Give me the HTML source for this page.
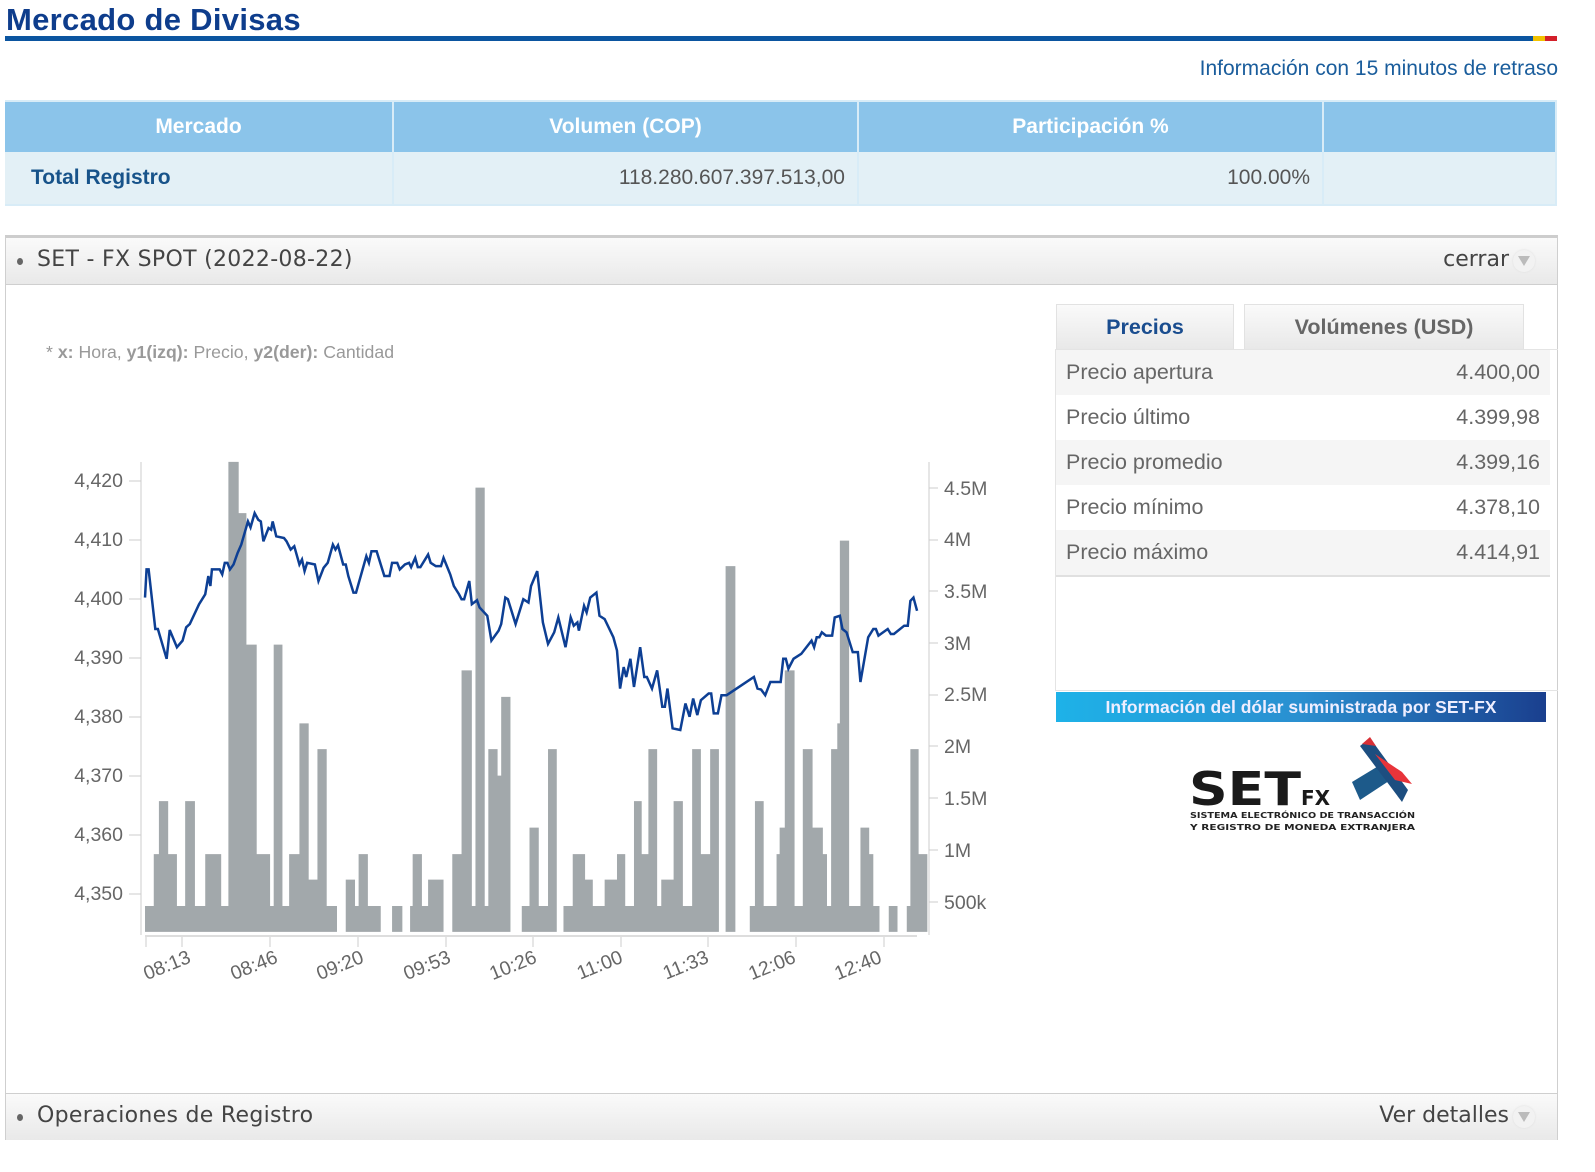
<!DOCTYPE html>
<html><head><meta charset="utf-8"><style>
*{margin:0;padding:0;box-sizing:border-box}
body{width:1595px;height:1172px;background:#fff;font-family:"Liberation Sans",Arial,sans-serif;position:relative;overflow:hidden}
.abs{position:absolute}
.title{left:6px;top:2px;font-size:31px;font-weight:bold;color:#0e3d8c;letter-spacing:0.3px}
.bar{left:5px;top:36px;width:1528px;height:5px;background:#0b55a0}
.info{right:37px;top:57px;font-size:21px;color:#1a5d9c}
table.t{position:absolute;left:5px;top:100px;width:1552px;border-collapse:collapse}
table.t th{background:#8bc4ea;color:#fff;font-size:21px;height:51px;border-right:2px solid #d8ecf7;border-top:2px solid #d8ecf7}
table.t td{background:#e3f0f6;height:53px;font-size:21px;color:#555;border-right:2px solid #d8ecf7;border-bottom:2px solid #d8ecf7;padding:0 12px}
.panel{left:5px;top:235px;width:1553px;height:905px;border:1px solid #cfcfcf;border-top:3px solid #cdcdcd}
.hdr{position:absolute;left:0;width:100%;height:47px;background:linear-gradient(#fafafa,#e9e9e9);border-bottom:1px solid #cfcfcf;font-family:"DejaVu Sans",Verdana,sans-serif;font-size:22px;color:#444}
.hdr .dot{position:absolute;left:11px;top:20px;width:6px;height:7px;border-radius:50%;background:#666}
.hdr .l{position:absolute;left:31px;top:9px;letter-spacing:0.3px}
.hdr .r{position:absolute;right:48px;top:9px}
.hdr .ic{position:absolute;right:22px;top:12px;width:22px;height:22px;border-radius:50%;background:#f2f2f2;box-shadow:0 0 2px #ddd}
.hdr .ic:after{content:"";position:absolute;left:5px;top:6px;border-left:6px solid transparent;border-right:6px solid transparent;border-top:10px solid #bbb}
.tab{position:absolute;top:304px;height:46px;font-size:21.5px;font-weight:bold;text-align:center;line-height:44px;background:linear-gradient(#fafafa,#e8e8e8);border:1px solid #e2e2e2;border-bottom:none}
.row{position:absolute;left:1056px;width:494px;height:45px;font-size:21.5px;color:#666;line-height:45px;padding:0 10px}
.row span{float:right}
</style></head><body>
<div class="abs title">Mercado de Divisas</div>
<div class="abs bar"></div>
<div class="abs" style="left:1533px;top:36px;width:12px;height:5px;background:#f2c200"></div>
<div class="abs" style="left:1545px;top:36px;width:12px;height:5px;background:#d3202a"></div>
<div class="abs info">Información con 15 minutos de retraso</div>
<table class="t">
<tr><th style="width:388px">Mercado</th><th style="width:465px">Volumen (COP)</th><th style="width:465px">Participación %</th><th></th></tr>
<tr><td style="color:#17538a;font-weight:bold;padding-left:26px">Total Registro</td><td style="text-align:right">118.280.607.397.513,00</td><td style="text-align:right">100.00%</td><td></td></tr>
</table>

<div class="abs panel">
 <div class="hdr" style="top:0"><div class="dot"></div><div class="l">SET - FX SPOT (2022-08-22)</div><div class="r">cerrar</div><div class="ic"></div></div>
 <div class="hdr" style="top:855px;border-top:1px solid #cfcfcf;border-bottom:none"><div class="dot"></div><div class="l">Operaciones de Registro</div><div class="r">Ver detalles</div><div class="ic"></div></div>
</div>

<div class="abs" style="left:46px;top:342px;font-size:17.7px;color:#999">* <b>x:</b> Hora, <b>y1(izq):</b> Precio, <b>y2(der):</b> Cantidad</div>

<svg class="abs" style="left:0;top:0" width="1595" height="1172">
<g font-family="Liberation Sans, Arial, sans-serif" font-size="19.5" fill="#666">
<g text-anchor="end">
<text x="123" y="487">4,420</text><text x="123" y="546">4,410</text><text x="123" y="605">4,400</text><text x="123" y="664">4,390</text><text x="123" y="723">4,380</text><text x="123" y="782">4,370</text><text x="123" y="841">4,360</text><text x="123" y="900">4,350</text>
</g>
<text x="944" y="495">4.5M</text><text x="944" y="546">4M</text><text x="944" y="598">3.5M</text><text x="944" y="650">3M</text><text x="944" y="701">2.5M</text><text x="944" y="753">2M</text><text x="944" y="805">1.5M</text><text x="944" y="857">1M</text><text x="944" y="909">500k</text>
</g>
<g stroke="#ccc" stroke-width="1">
<line x1="141" y1="462" x2="141" y2="935"/>
<line x1="129" y1="481" x2="141" y2="481"/><line x1="129" y1="540" x2="141" y2="540"/><line x1="129" y1="599" x2="141" y2="599"/><line x1="129" y1="658" x2="141" y2="658"/><line x1="129" y1="717" x2="141" y2="717"/><line x1="129" y1="776" x2="141" y2="776"/><line x1="129" y1="835" x2="141" y2="835"/><line x1="129" y1="894" x2="141" y2="894"/>
<line x1="929" y1="462" x2="929" y2="935"/>
<line x1="929" y1="488" x2="938" y2="488"/><line x1="929" y1="540" x2="938" y2="540"/><line x1="929" y1="591" x2="938" y2="591"/><line x1="929" y1="643" x2="938" y2="643"/><line x1="929" y1="695" x2="938" y2="695"/><line x1="929" y1="746" x2="938" y2="746"/><line x1="929" y1="798" x2="938" y2="798"/><line x1="929" y1="850" x2="938" y2="850"/><line x1="929" y1="902" x2="938" y2="902"/>
<line x1="145" y1="936" x2="917" y2="936" stroke="#ddd" stroke-width="2"/>
<line x1="146" y1="937" x2="146" y2="947"/><line x1="182" y1="937" x2="182" y2="947"/><line x1="270" y1="937" x2="270" y2="947"/><line x1="358" y1="937" x2="358" y2="947"/><line x1="446" y1="937" x2="446" y2="947"/><line x1="533" y1="937" x2="533" y2="947"/><line x1="621" y1="937" x2="621" y2="947"/><line x1="708" y1="937" x2="708" y2="947"/><line x1="796" y1="937" x2="796" y2="947"/><line x1="884" y1="937" x2="884" y2="947"/>
</g>
<g font-family="Liberation Sans, Arial, sans-serif" font-size="19.5" fill="#666" text-anchor="end">
<text transform="translate(192,962) rotate(-22)">08:13</text>
<text transform="translate(279,962) rotate(-22)">08:46</text>
<text transform="translate(365,962) rotate(-22)">09:20</text>
<text transform="translate(452,962) rotate(-22)">09:53</text>
<text transform="translate(538,962) rotate(-22)">10:26</text>
<text transform="translate(624,962) rotate(-22)">11:00</text>
<text transform="translate(710,962) rotate(-22)">11:33</text>
<text transform="translate(797,962) rotate(-22)">12:06</text>
<text transform="translate(883,962) rotate(-22)">12:40</text>
</g>
<g transform="translate(127,442) scale(0.5147,0.331)" fill="#a2a8ab">
<path d="M35 1480V1402H52V1245H62V1085H80V1245H97V1402H113V1085H132V1402H152V1245H183V1402H197V60H217V215H232V612H252V1245H278V1402H285V612H302V1402H315V1245H335V850H353V1322H370V928H388V1402H408V1480Z"/>
<path d="M425 1480V1322H443V1402H450V1245H468V1402H493V1480Z"/>
<path d="M515 1480V1402H535V1480Z"/>
<path d="M550 1480V1402H555V1245H573V1402H585V1322H615V1480Z"/>
<path d="M632 1480V1245H650V690H670V1402H677V138H695V1402H702V928H720V1008H727V770H745V1480Z"/>
<path d="M767 1480V1402H782V1165H800V1402H818V928H835V1480Z"/>
<path d="M848 1480V1402H866V1245H890V1322H905V1402H928V1322H952V1245H968V1402H985V1085H1000V1245H1013V928H1030V1402H1038V1322H1062V1085H1080V1402H1098V928H1115V1245H1133V928H1150V1480Z"/>
<path d="M1163 1480V375H1182V1480Z"/>
<path d="M1210 1480V1402H1220V1085H1237V1402H1262V1245H1268V1165H1278V690H1297V1402H1313V928H1332V1165H1352V1245H1360V1402H1368V928H1380V850H1385V298H1403V1402H1425V1165H1442V1245H1450V1402H1462V1480Z"/>
<path d="M1480 1480V1402H1497V1480Z"/>
<path d="M1515 1480V1402H1522V928H1538V1245H1555V1480Z"/>
<polyline fill="none" stroke="#0d3f94" stroke-width="2.5" vector-effect="non-scaling-stroke" points="35,470 38,385 42,385 55,565 60,565 77,655 83,568 97,620 108,600 115,560 122,550 140,490 152,460 158,405 162,435 165,385 180,385 185,400 190,365 195,365 200,385 207,370 215,335 222,310 235,240 240,258 248,215 255,235 260,240 265,300 275,260 280,265 283,240 290,285 305,290 310,300 318,325 325,315 335,370 340,355 345,390 350,365 365,370 372,420 382,380 390,365 400,310 405,325 410,312 420,370 425,370 430,405 440,455 445,455 465,345 470,365 475,330 485,330 500,405 510,405 515,365 525,365 530,385 540,370 548,365 552,378 560,350 565,378 570,378 585,340 590,365 600,375 610,375 615,350 628,400 635,435 645,460 650,475 655,475 665,420 670,490 680,478 685,500 700,525 708,600 722,570 727,550 735,470 740,475 755,550 770,475 780,485 785,435 797,390 808,545 818,610 830,575 838,530 852,620 862,530 868,555 875,545 878,570 888,495 893,515 900,470 912,455 918,525 928,535 945,590 952,630 958,745 965,680 970,710 978,655 985,740 997,620 1005,710 1010,710 1020,745 1030,690 1040,800 1045,800 1050,745 1060,865 1075,870 1085,790 1093,830 1100,775 1108,825 1115,780 1130,760 1135,760 1140,820 1148,820 1155,765 1165,765 1218,710 1225,745 1232,748 1240,765 1250,725 1270,725 1275,655 1280,655 1285,685 1295,655 1310,640 1330,600 1335,620 1340,590 1345,590 1350,575 1358,585 1370,585 1375,530 1385,525 1390,565 1398,575 1410,635 1420,635 1425,725 1440,590 1450,565 1455,565 1460,585 1478,565 1484,580 1490,580 1510,555 1517,555 1522,480 1528,470 1535,510"/>
</g>
</svg>

<div class="tab" style="left:1056px;width:178px;color:#1a4d8f">Precios</div>
<div class="tab" style="left:1244px;width:280px;color:#666">Volúmenes (USD)</div>
<div class="abs" style="left:1055px;top:349px;width:503px;height:342px;border:1px solid #e4e4e4;border-right:none"></div>
<div class="row" style="top:350px;background:#f5f5f5">Precio apertura<span>4.400,00</span></div>
<div class="row" style="top:395px;background:#fff">Precio último<span>4.399,98</span></div>
<div class="row" style="top:440px;background:#f5f5f5">Precio promedio<span>4.399,16</span></div>
<div class="row" style="top:485px;background:#fff">Precio mínimo<span>4.378,10</span></div>
<div class="row" style="top:530px;background:#f5f5f5;border-bottom:2px solid #e0e0e0;height:47px">Precio máximo<span>4.414,91</span></div>

<div class="abs" style="left:1056px;top:692px;width:490px;height:30px;background:linear-gradient(90deg,#1eb2e8,#2a8fd0 50%,#1a3f8e);color:#eef;font-size:17.5px;text-align:center;line-height:30px;font-weight:bold">Información del dólar suministrada por SET-FX</div>

<svg class="abs" style="left:1180px;top:732px" width="250" height="110">
<text x="9" y="73" font-family="DejaVu Sans, sans-serif" font-weight="bold" font-size="46" fill="#1a1a1a" textLength="112" lengthAdjust="spacingAndGlyphs">SET</text>
<text x="121" y="73" font-family="DejaVu Sans, sans-serif" font-weight="bold" font-size="20" fill="#1a1a1a">FX</text>
<path d="M172 50 L205 30 L215 45 L180 68 Z" fill="#1d5a8a"/>
<path d="M180 14 L190 6 L228 58 L222 70 Z" fill="#1d4e80"/>
<path d="M195 22 L222 40 L232 52 L215 48 Z" fill="#e8343a"/>
<path d="M182 12 L190 5 L196 14 Z" fill="#d83036"/>
<text x="10" y="86" font-family="DejaVu Sans, sans-serif" font-weight="bold" font-size="8" fill="#222" textLength="225" lengthAdjust="spacingAndGlyphs">SISTEMA ELECTRÓNICO DE TRANSACCIÓN</text>
<text x="10" y="98" font-family="DejaVu Sans, sans-serif" font-weight="bold" font-size="8" fill="#222" textLength="225" lengthAdjust="spacingAndGlyphs">Y REGISTRO DE MONEDA EXTRANJERA</text>
</svg>
</body></html>
